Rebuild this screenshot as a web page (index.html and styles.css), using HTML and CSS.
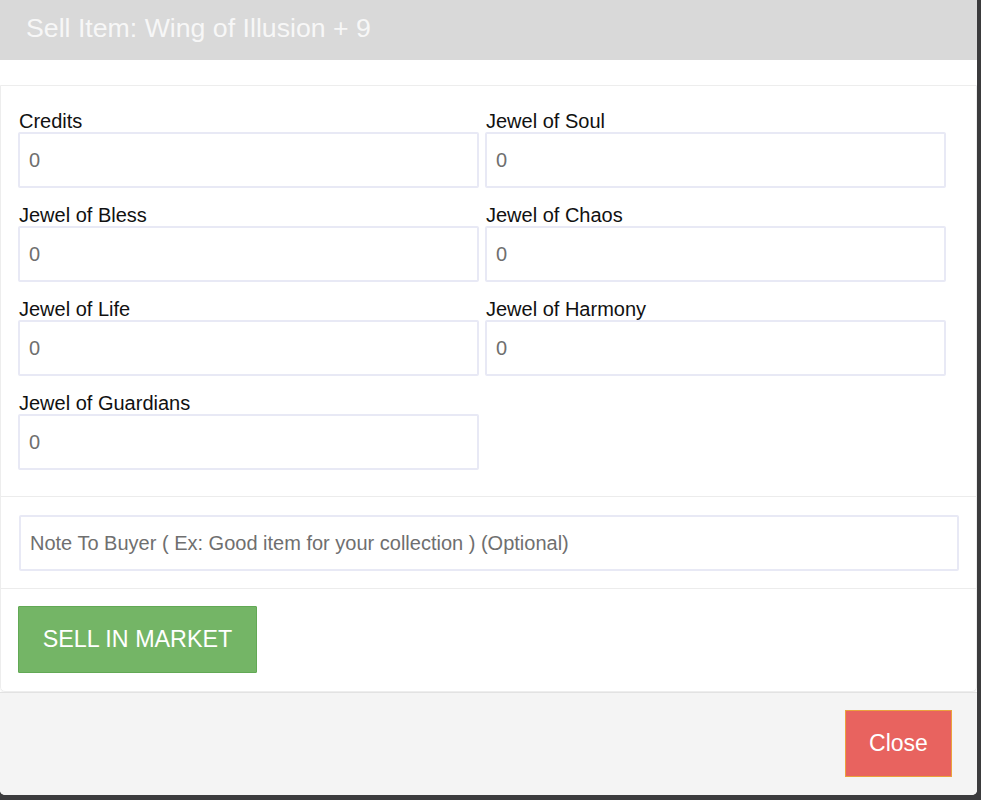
FILE: index.html
```html
<!DOCTYPE html>
<html>
<head>
<meta charset="utf-8">
<link rel="stylesheet" href="styles.css">
</head>
<body>
<div class="modal">
  <div class="modal-header">Sell Item: Wing of Illusion + 9</div>
  <div class="modal-body">
    <div class="card">
      <div class="section fields">
        <div class="field"><label>Credits</label><input type="text" value="0"></div>
        <div class="field"><label>Jewel of Soul</label><input type="text" value="0"></div>
        <div class="field"><label>Jewel of Bless</label><input type="text" value="0"></div>
        <div class="field"><label>Jewel of Chaos</label><input type="text" value="0"></div>
        <div class="field"><label>Jewel of Life</label><input type="text" value="0"></div>
        <div class="field"><label>Jewel of Harmony</label><input type="text" value="0"></div>
        <div class="field"><label>Jewel of Guardians</label><input type="text" value="0"></div>
      </div>
      <div class="section note">
        <input type="text" class="note-input" placeholder="Note To Buyer ( Ex: Good item for your collection ) (Optional)">
      </div>
      <div class="section actions">
        <button class="btn-sell">SELL IN MARKET</button>
      </div>
    </div>
  </div>
  <div class="modal-footer">
    <button class="btn-close">Close</button>
  </div>
</div>
</body>
</html>
```
FILE: styles.css
```css
html, body {
  margin: 0;
  padding: 0;
}
body {
  background: #3b3b3d;
  font-family: "Liberation Sans", Arial, sans-serif;
  width: 981px;
  height: 800px;
  overflow: hidden;
}
.modal {
  width: 977px;
  height: 795px;
  background: #ffffff;
  border-radius: 0 0 5px 5px;
  display: flex;
  flex-direction: column;
  overflow: hidden;
}
.modal-header {
  height: 60px;
  box-sizing: border-box;
  background: #d9d9d9;
  color: #f7f7f7;
  font-size: 26.7px;
  line-height: 57px;
  padding-left: 26px;
}
.modal-body {
  padding-top: 25px;
  padding-right: 0;
}
.card {
  border: 1px solid #ededed;
  border-radius: 0 0 5px 5px;
  box-shadow: 0 1px 1px rgba(0,0,0,0.06);
}
.section + .section {
  border-top: 1px solid #ececec;
}
.fields {
  display: grid;
  grid-template-columns: 461px 461px;
  column-gap: 6px;
  row-gap: 16px;
  padding: 24px 0 26px 17px;
}
.field label {
  display: block;
  font-size: 20px;
  line-height: 22px;
  color: #111;
  padding-left: 1px;
}
.field input,
.note-input {
  display: block;
  box-sizing: border-box;
  width: 100%;
  height: 56px;
  border: 2px solid #e8e9f5;
  border-radius: 2px;
  padding: 0 0 0 9px;
  font-family: "Liberation Sans", Arial, sans-serif;
  font-size: 20px;
  color: #6f6f6f;
  background: #fff;
  outline: none;
}
.note {
  padding: 18px 17px 17px 18px;
}
.note-input::placeholder {
  color: #6f6f6f;
}
.actions {
  padding: 17px 17px 18px 17px;
}
.btn-sell {
  display: block;
  width: 239px;
  height: 67px;
  box-sizing: border-box;
  background: #74b566;
  border: 1px solid #62a955;
  border-radius: 1px;
  color: #ffffff;
  font-family: "Liberation Sans", Arial, sans-serif;
  font-size: 23.3px;
  padding: 0;
}
.modal-footer {
  flex: 1;
  background: #f4f4f4;
  border-top: 1px solid #e2e2e2;
  display: flex;
  justify-content: flex-end;
  align-items: flex-start;
  padding: 17px 25px 0 0;
}
.btn-close {
  width: 107px;
  height: 67px;
  box-sizing: border-box;
  background: #e8635f;
  border: 1px solid #eba13c;
  color: #ffffff;
  font-family: "Liberation Sans", Arial, sans-serif;
  font-size: 23px;
  padding: 0;
}
```
